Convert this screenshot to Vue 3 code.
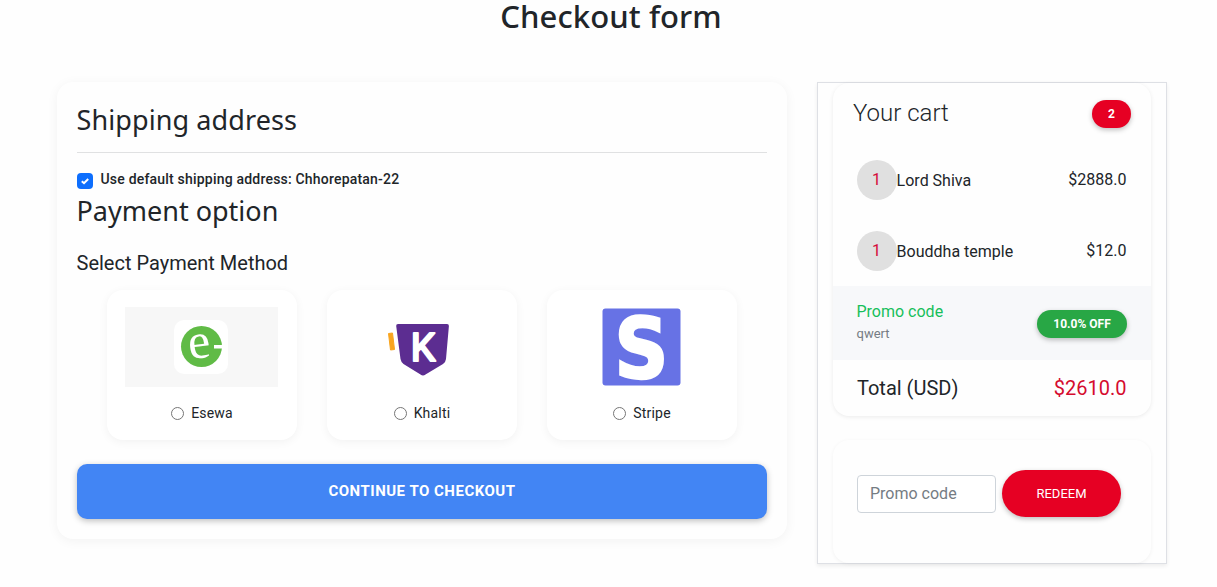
<script setup>
const methods = [
  { id: 'esewa', label: 'Esewa' },
  { id: 'khalti', label: 'Khalti' },
  { id: 'stripe', label: 'Stripe' },
]
const items = [
  { qty: 1, name: 'Lord Shiva', price: '$2888.0' },
  { qty: 1, name: 'Bouddha temple', price: '$12.0' },
]
</script>

<template>
  <main class="page">
    <h2 class="title"><span>Checkout form</span></h2>
    <div class="columns">
      <section class="checkout">
        <h3 class="heading ship"><span>Shipping address</span></h3>
        <label class="default">
          <span class="check">
            <svg width="16" height="16" viewBox="0 0 16 16"><path d="M4.8 8.2 7 10.2 11.2 6" fill="none" stroke="#fff" stroke-width="2" /></svg>
          </span>
          <span class="default-text">Use default shipping address: Chhorepatan-22</span>
        </label>
        <h3 class="heading pay"><span>Payment option</span></h3>
        <h5 class="select">Select Payment Method</h5>
        <div class="methods">
          <div v-for="m in methods" :key="m.id" class="method">
            <svg v-if="m.id === 'esewa'" class="logo" width="153" height="80" viewBox="0 0 153 80">
              <rect width="153" height="80" fill="#f7f7f7" />
              <rect x="49" y="13" width="54" height="54" rx="10" fill="#fff" />
              <circle cx="76.5" cy="39.5" r="20.5" fill="#60bb46" />
              <rect x="89" y="38" width="10" height="3.500" fill="#fff" />
              <text class="e" x="74.500" y="51" text-anchor="middle" transform="rotate(-7 75 40)">e</text>
            </svg>
            <svg v-else-if="m.id === 'khalti'" class="logo" width="154" height="80" viewBox="0 0 154 80">
              <path d="M43.500 26.500 47.500 26 49.500 42.500 45.500 43Z" fill="#f9a51f" stroke="#f9a51f" stroke-width="1" stroke-linejoin="round" />
              <path d="M53 17H102Q104 17 103.900 19L101 52Q100.700 55 98 57L80.500 67.500Q78 69.500 75.500 67.500L58.500 57Q56 55 55.500 52L51.200 19Q51 17 53 17Z" fill="#5c2d91" />
              <text class="k" x="78" y="53.500" text-anchor="middle">K</text>
            </svg>
            <svg v-else class="logo" width="154" height="80" viewBox="0 0 154 80">
              <rect x="37.500" y="1.500" width="78" height="77" rx="3" fill="#6772e5" />
              <text class="s" text-anchor="middle" transform="translate(76.500 70.500) scale(0.89 1)">S</text>
            </svg>
            <label class="option"><span class="radio"></span>{{ m.label }}</label>
          </div>
        </div>
        <button class="continue">CONTINUE TO CHECKOUT</button>
      </section>

      <aside class="side">
        <div class="cart">
          <div class="cart-head">
            <h4>Your cart</h4>
            <span class="badge red">2</span>
          </div>
          <div v-for="i in items" :key="i.name" class="item">
            <span class="qty">{{ i.qty }}</span>
            <span class="name">{{ i.name }}</span>
            <span class="price">{{ i.price }}</span>
          </div>
          <div class="promo">
            <div>
              <div class="promo-title">Promo code</div>
              <div class="promo-code">qwert</div>
            </div>
            <span class="badge green">10.0% OFF</span>
          </div>
          <div class="total"><span>Total (USD)</span><span class="sum">$2610.0</span></div>
        </div>
        <div class="redeem">
          <input type="text" placeholder="Promo code" />
          <button>REDEEM</button>
        </div>
      </aside>
    </div>
  </main>
</template>

<style>
body { background: #fefefe; }
</style>

<style scoped>
* { box-sizing: border-box; }
h2, h3, h4, h5 { margin: 0; }
.page { width: 1217px; height: 587px; font: 400 16px/24px Roboto, sans-serif; color: #212529; }
.title { height: 82px; padding-left: 5px; text-align: center; font: 500 31px/32px "Noto Sans", sans-serif; letter-spacing: 0.1px; }
.columns { display: flex; gap: 30px; padding-left: 57px; align-items: flex-start; }
.checkout { width: 730px; height: 457px; padding: 0 20px; border-radius: 16px; background: #fefefe; box-shadow: 0 2px 12px rgba(0, 0, 0, 0.05); }
.heading { font: 400 27px/36px "Noto Sans", sans-serif; text-indent: -0.5px; }
.ship { height: 71px; padding-top: 20px; border-bottom: 1px solid #e0e1e2; letter-spacing: 0.1px; }
.default { display: flex; gap: 7.5px; height: 38px; padding-top: 20px; font: 500 14px/16px Roboto, sans-serif; }
.check { width: 16px; height: 16px; border-radius: 4px; background: #0d6efd; }
.check svg { display: block; }
.default-text { margin-top: -2px; letter-spacing: 0.2px; }
.pay { height: 60px; padding-top: 2px; }
.select { height: 39px; font: 400 20px/24px Roboto, sans-serif; text-indent: -0.5px; }
.methods { display: flex; gap: 30px; padding-left: 30px; }
.method { width: 190px; height: 150px; padding-top: 17px; border-radius: 16px; background: #fff; box-shadow: 0 2px 10px rgba(0, 0, 0, 0.05); text-align: center; }
.logo { display: block; margin: 0 0 0 18px; overflow: visible; }
.e { font: 400 50px "Liberation Serif", serif; fill: #fff; }
.k { font: 400 39px Roboto, sans-serif; fill: #fff; stroke: #fff; stroke-width: 2.2px; stroke-linejoin: round; }
.s { font: 700 84px "DejaVu Sans", sans-serif; fill: #fff; stroke: #fff; stroke-width: 2.5px; }
.option { display: flex; gap: 7px; justify-content: center; align-items: center; height: 20px; margin-top: 16px; font-size: 14px; letter-spacing: 0.2px; }
.radio { width: 13px; height: 13px; border: 1px solid #767676; border-radius: 50%; background: #fff; }
.continue { display: block; width: 690px; height: 55px; margin-top: 24px; padding: 0 0 2px; border: 0; border-radius: 10px; background: #4285f4; color: #fff; font: 700 15px/18px Roboto, sans-serif; letter-spacing: 0.5px; box-shadow: 0 2px 6px rgba(0, 0, 0, 0.25); }
.side { width: 350px; height: 482px; padding: 0 15px; border: 1px solid #dee0e5; background: #fefefe; box-shadow: 0 2px 4px rgba(0, 0, 0, 0.07); }
.cart { height: 333px; border-radius: 16px; background: #fefefe; box-shadow: 0 1px 4px rgba(0, 0, 0, 0.08); }
.cart-head { display: flex; justify-content: space-between; height: 61px; padding: 17px 20px 0; }
.cart-head h4 { font: 300 24px/26px Roboto, sans-serif; }
.badge { height: 28px; border-radius: 14px; color: #fff; font: 700 12px/28px Roboto, sans-serif; text-align: center; box-shadow: 0 2px 5px rgba(0, 0, 0, 0.25); }
.red { width: 39px; background: #e60023; }
.item { display: flex; align-items: center; height: 71px; padding: 0 24.500px 0 24px; }
.qty { width: 40px; height: 40px; padding-right: 1px; border-radius: 50%; background: #e0e0e0; color: #d50b38; line-height: 40px; text-align: center; }
.name { flex: 1; padding-top: 2px; text-indent: -0.4px; }
.promo { display: flex; justify-content: space-between; height: 74px; padding: 14px 24px 0; background: #f7f8fa; }
.promo-title { color: #17bf5b; line-height: 23px; text-indent: -0.5px; }
.promo-code { color: #757c83; font-size: 13px; line-height: 21px; text-indent: -0.5px; }
.green { width: 90px; margin-top: 10px; background: #28a745; }
.total { display: flex; justify-content: space-between; padding: 16px 24.500px 0 24px; font-size: 20px; }
.sum { color: #d50b2e; }
.redeem { display: flex; gap: 6px; align-items: center; height: 123px; margin-top: 24px; padding: 0 24px 16px; border-radius: 16px; background: #fefefe; box-shadow: 0 1px 4px rgba(0, 0, 0, 0.05); }
.redeem input { width: 139px; height: 38px; padding: 0 12px; border: 1px solid #ced4da; border-radius: 4px; background: #fff; font: 400 16px/24px Roboto, sans-serif; }
.redeem input::placeholder { color: #757c83; opacity: 1; }
.redeem button { width: 119px; height: 47px; padding: 0; border: 0; border-radius: 24px; background: #e60023; color: #fff; font: 400 13px/20px Roboto, sans-serif; box-shadow: 0 2px 5px rgba(0, 0, 0, 0.25); }
</style>
